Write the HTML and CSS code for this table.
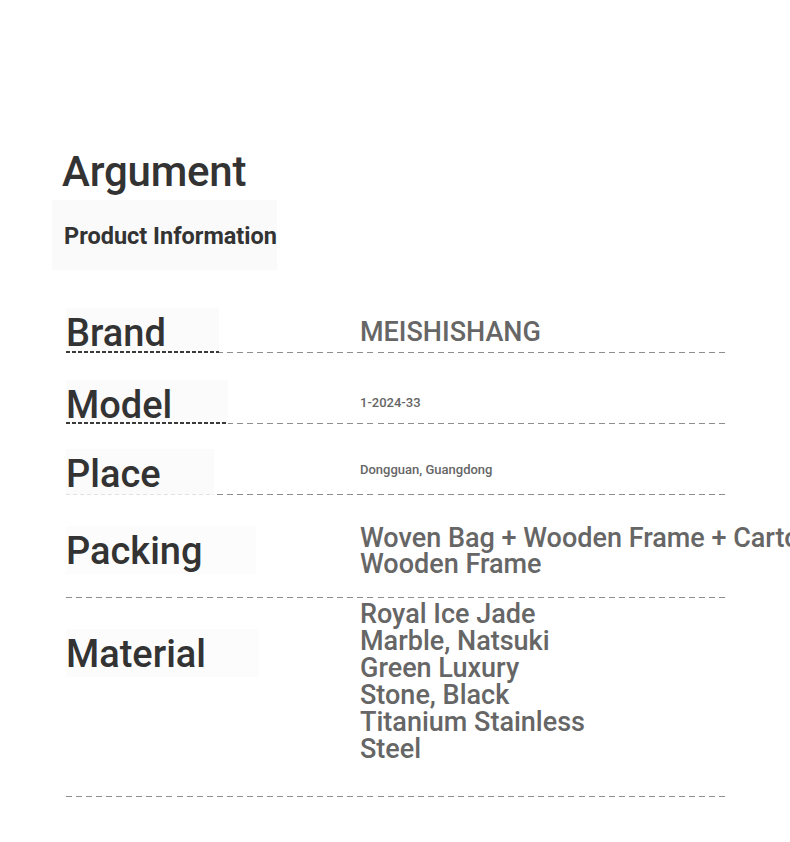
FILE: index.html
```html
<!DOCTYPE html>
<html lang="en">
<head>
<meta charset="utf-8">
<title>Argument</title>
<link rel="stylesheet" href="styles.css">
</head>
<body>
<main class="page">
  <h1 class="title">Argument</h1>
  <div class="section-head">Product Information</div>
  <div class="spec">
    <div class="row row-brand">
      <div class="key key-dark"><span>Brand</span></div>
      <div class="val val-big">MEISHISHANG</div>
    </div>
    <div class="row row-model">
      <div class="key key-dark key-wide"><span>Model</span></div>
      <div class="val val-small">1-2024-33</div>
    </div>
    <div class="row row-place">
      <div class="key key-faint"><span>Place</span></div>
      <div class="val val-small">Dongguan, Guangdong</div>
    </div>
    <div class="row row-packing">
      <div class="key key-plain"><span>Packing</span></div>
      <div class="val val-lines">
        <span class="nowrap">Woven Bag + Wooden Frame + Carton</span>
        <span class="nowrap">Wooden Frame</span>
      </div>
    </div>
    <div class="row row-material">
      <div class="key key-plain"><span>Material</span></div>
      <div class="val val-wrap">Royal Ice Jade Marble, Natsuki Green Luxury Stone, Black Titanium Stainless Steel</div>
    </div>
  </div>
</main>
</body>
</html>
```
FILE: styles.css
```css
html, body {
  margin: 0;
  padding: 0;
  background: #ffffff;
}
body {
  font-family: Roboto, "Liberation Sans", Arial, sans-serif;
  color: #333333;
  overflow: hidden;
}
.page {
  padding-top: 147px;
}
.title {
  margin: 0 0 0 62px;
  font-size: 42px;
  line-height: 50px;
  font-weight: 500;
  letter-spacing: -0.2px;
  color: #333333;
}
.section-head {
  display: inline-block;
  margin: 3px 0 0 52px;
  padding: 24px 0 22px 12px;
  font-size: 23.5px;
  line-height: 24px;
  font-weight: 700;
  color: #333333;
  background: #fafafa;
  white-space: nowrap;
}
.spec {
  margin: 12px 0 0 66px;
  width: 660px;
}
.row {
  display: grid;
  grid-template-columns: 294px 1fr;
  align-items: start;
  background-image: repeating-linear-gradient(to right, #8e8e8e 0 6px, transparent 6px 10.05px);
  background-repeat: no-repeat;
  background-position: left bottom;
  background-size: 100% 1px;
}
.key {
  justify-self: start;
  align-self: stretch;
  font-size: 38px;
  line-height: 38px;
  font-weight: 500;
  color: #333333;
  background-color: #fbfbfb;
  padding-top: 6px;
  padding-right: 53px;
}
.key-wide { padding-right: 56px; }
.key-dark {
  background-image: repeating-linear-gradient(to right, #3a3a3a 0 4px, transparent 4px 6px);
  background-repeat: no-repeat;
  background-position: left bottom;
  background-size: 100% 2px;
}
.key-faint {
  background-image: repeating-linear-gradient(to right, #e2e2e2 0 4px, transparent 4px 7px);
  background-repeat: no-repeat;
  background-position: left bottom;
  background-size: 100% 1px;
}
.key-plain {
  align-self: start;
  padding-bottom: 4px;
  background-color: #fcfcfc;
}
.val {
  color: #666666;
  font-weight: 500;
}
.val-big {
  font-size: 27px;
  line-height: 27px;
}
.val-small {
  font-size: 13px;
  line-height: 13px;
}
.val-lines {
  font-size: 27px;
  line-height: 26px;
  display: flex;
  flex-direction: column;
}
.val-wrap {
  font-size: 27px;
  line-height: 27px;
  width: 232px;
}
.nowrap { white-space: nowrap; }

.row-brand { height: 71px; }
.row-brand .key { margin-top: 26px; }
.row-brand .val { padding-top: 37px; }

.row-model { height: 71px; }
.row-model .key { margin-top: 27px; }
.row-model .val { padding-top: 43px; }

.row-place { height: 71px; }
.row-place .key { margin-top: 25px; }
.row-place .val { padding-top: 39px; }

.row-packing { height: 103px; }
.row-packing .key { margin-top: 31px; }
.row-packing .val { padding-top: 30px; }

.row-material { height: 199px; }
.row-material .key { margin-top: 31px; }
.row-material .val { padding-top: 3px; }
```
